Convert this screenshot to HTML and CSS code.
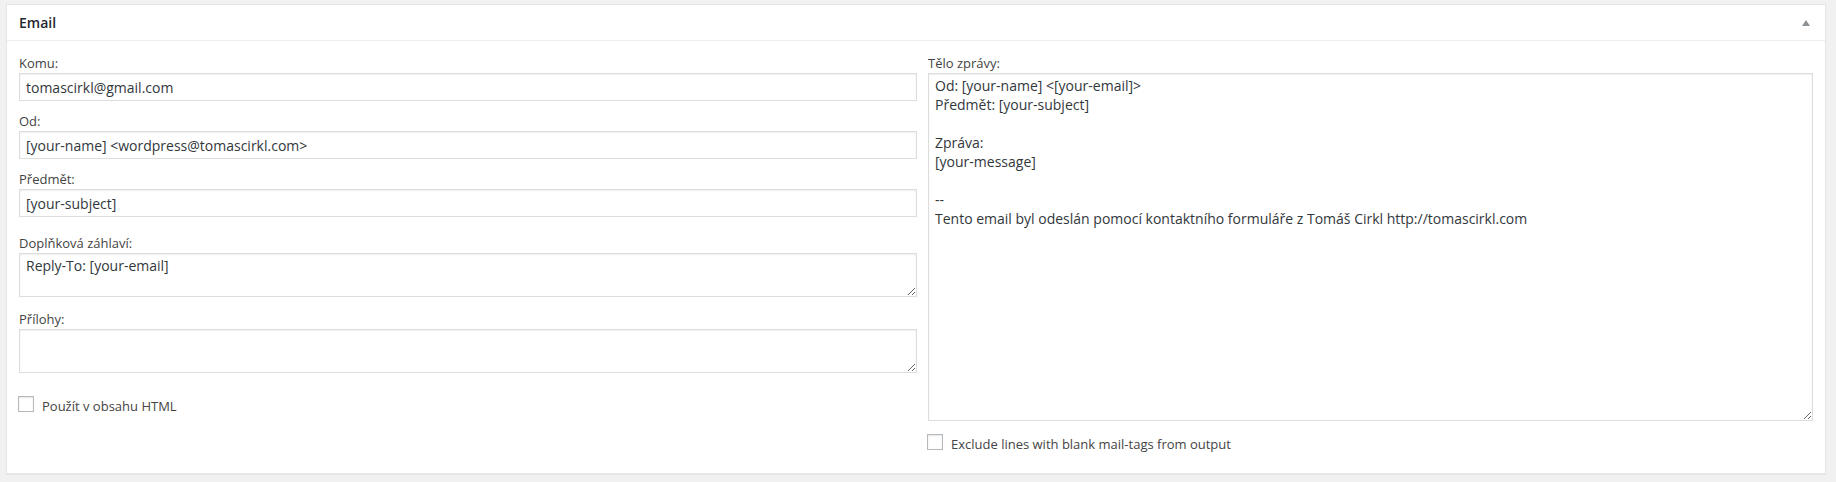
FILE: index.html
```html
<!DOCTYPE html>
<html lang="cs">
<head>
<meta charset="utf-8">
<title>Email</title>
<link rel="stylesheet" href="styles.css">
</head>
<body>
<div class="wrap">
  <div class="postbox">
    <div class="hndle">
      <span class="hndle-title">Email</span>
      <svg class="toggle" width="8" height="6" viewBox="0 0 8 6" aria-hidden="true"><polygon points="4,0 8,6 0,6" fill="#8d9297"/></svg>
    </div>
    <div class="inside">
      <div class="col col-left">
        <div class="field">
          <label class="lbl">Komu:</label>
          <input class="txt" type="text" value="tomascirkl@gmail.com">
        </div>
        <div class="field">
          <label class="lbl">Od:</label>
          <input class="txt" type="text" value="[your-name] &lt;wordpress@tomascirkl.com&gt;">
        </div>
        <div class="field field-gap">
          <label class="lbl">Předmět:</label>
          <input class="txt" type="text" value="[your-subject]">
        </div>
        <div class="field field-ta">
          <label class="lbl">Doplňková záhlaví:</label>
          <textarea class="area area-small">Reply-To: [your-email]</textarea>
        </div>
        <div class="field">
          <label class="lbl">Přílohy:</label>
          <textarea class="area area-small"></textarea>
        </div>
        <div class="check check-left">
          <span class="box"></span>
          <span class="check-text">Použít v obsahu HTML</span>
        </div>
      </div>
      <div class="col col-right">
        <div class="field">
          <label class="lbl">Tělo zprávy:</label>
          <textarea class="area area-body">Od: [your-name] &lt;[your-email]&gt;
Předmět: [your-subject]

Zpráva:
[your-message]

--
Tento email byl odeslán pomocí kontaktního formuláře z Tomáš Cirkl http://tomascirkl.com</textarea>
        </div>
        <div class="check check-right">
          <span class="box"></span>
          <span class="check-text">Exclude lines with blank mail-tags from output</span>
        </div>
      </div>
    </div>
  </div>
</div>
</body>
</html>
```
FILE: styles.css
```css
html, body {
  margin: 0;
  padding: 0;
}
body {
  background: #f1f1f1;
  font-family: "Open Sans", "Liberation Sans", sans-serif;
  color: #444;
  width: 1836px;
  height: 482px;
  overflow: hidden;
}
.wrap {
  padding: 4px 10px 0 6px;
}
.postbox {
  background: #fff;
  border: 1px solid #e5e5e5;
  box-shadow: 0 1px 1px rgba(0, 0, 0, 0.04);
  box-sizing: border-box;
  height: 470px;
}
.hndle {
  height: 35px;
  border-bottom: 1px solid #eee;
  display: flex;
  align-items: center;
  justify-content: space-between;
  padding: 0 15px 0 12px;
}
.hndle-title {
  font-size: 14px;
  font-weight: 600;
  color: #23282d;
  line-height: 35px;
}
.toggle {
  display: block;
  margin-top: 1px;
}
.inside {
  display: flex;
  padding: 13px 12px 0 12px;
}
.col-left {
  width: 898px;
  flex: none;
}
.col-right {
  flex: 1;
  margin-left: 11px;
}
.field {
  margin-bottom: 11px;
}
.field-gap {
  margin-bottom: 17px;
}
.field-ta {
  margin-bottom: 13px;
}
.lbl {
  display: block;
  font-size: 13px;
  line-height: 19px;
  color: #444;
}
.txt, .area {
  display: block;
  width: 100%;
  box-sizing: border-box;
  border: 1px solid #ddd;
  box-shadow: inset 0 1px 2px rgba(0, 0, 0, 0.07);
  background: #fff;
  color: #32373c;
  font-family: "Open Sans", "Liberation Sans", sans-serif;
  font-size: 14px;
  margin: 0;
  outline: none;
  border-radius: 0;
}
.txt {
  height: 28px;
  padding: 0 6px;
}
.area {
  padding: 2px 6px;
  line-height: 19px;
  resize: vertical;
}
.area-small {
  height: 44px;
}
.area-body {
  height: 348px;
}
.check {
  display: flex;
  align-items: flex-start;
}
.check-left {
  margin-top: 23px;
}
.check-right {
  margin-top: 13px;
}
.box {
  display: block;
  width: 16px;
  height: 16px;
  box-sizing: border-box;
  border: 1px solid #b4b9be;
  background: #fff;
  box-shadow: inset 0 1px 2px rgba(0, 0, 0, 0.1);
  margin-left: -1px;
  margin-right: 8px;
  flex: none;
}
.check-text {
  font-size: 13px;
  line-height: 19px;
  padding-top: 1px;
  color: #444;
}
```
